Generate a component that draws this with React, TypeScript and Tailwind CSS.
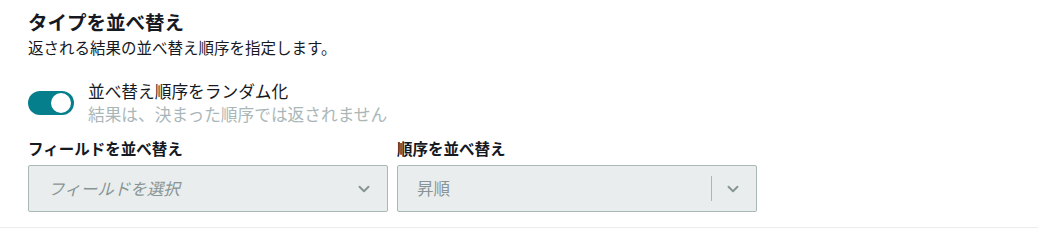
import { ChevronDown } from 'lucide-react';

const font = { fontFamily: '"Noto Sans CJK JP", "Noto Sans", sans-serif' };

const Select = ({ text, italic, divider }: { text: string; italic?: boolean; divider?: boolean }) => (
  <div className="flex h-[47px] w-[360px] items-center rounded-[2px] border border-[#aab7b8] bg-[#eaeded] pl-[19px] pr-[14px]">
    <span className={`flex-1 text-[16.5px] text-[#879596] ${italic ? 'italic' : ''}`}>{text}</span>
    {divider && <div className="mr-[12px] h-[25px] w-px bg-[#aab7b8]" />}
    <ChevronDown className="h-[18px] w-[18px] text-[#879596]" strokeWidth={2.6} />
  </div>
);

export default function App() {
  return (
    <div style={font} className="h-[229px] w-[1038px] bg-white">
      <div className="flex h-[228px] flex-col border-b border-[#eaeded] pl-[28px] pt-[8px]">
        <div className="text-[19.5px] font-bold leading-[28px] text-[#16191f]">タイプを並べ替え</div>
        <p className="text-[15.5px] leading-[22px] text-[#16191f]">返される結果の並べ替え順序を指定します。</p>

        <div className="mt-[22px] flex items-center">
          <div className="flex h-[24px] w-[46px] items-center justify-end rounded-full bg-[#047f8b] pr-[3px]">
            <div className="h-[20px] w-[20px] rounded-full bg-white" />
          </div>
          <div className="ml-[14px] flex flex-col">
            <span className="text-[16.7px] leading-[23px] text-[#16191f]">並べ替え順序をランダム化</span>
            <span className="text-[16.7px] leading-[23px] text-[#aab7b8]">結果は、決まった順序では返されません</span>
          </div>
        </div>

        <div className="mt-[12px] flex gap-[9px]">
          <div className="flex flex-col gap-[7px]">
            <label className="text-[15.5px] font-bold leading-[20px] text-[#16191f]">フィールドを並べ替え</label>
            <Select text="フィールドを選択" italic />
          </div>
          <div className="flex flex-col gap-[7px]">
            <label className="text-[15.5px] font-bold leading-[20px] text-[#16191f]">順序を並べ替え</label>
            <Select text="昇順" divider />
          </div>
        </div>
      </div>
    </div>
  );
}
